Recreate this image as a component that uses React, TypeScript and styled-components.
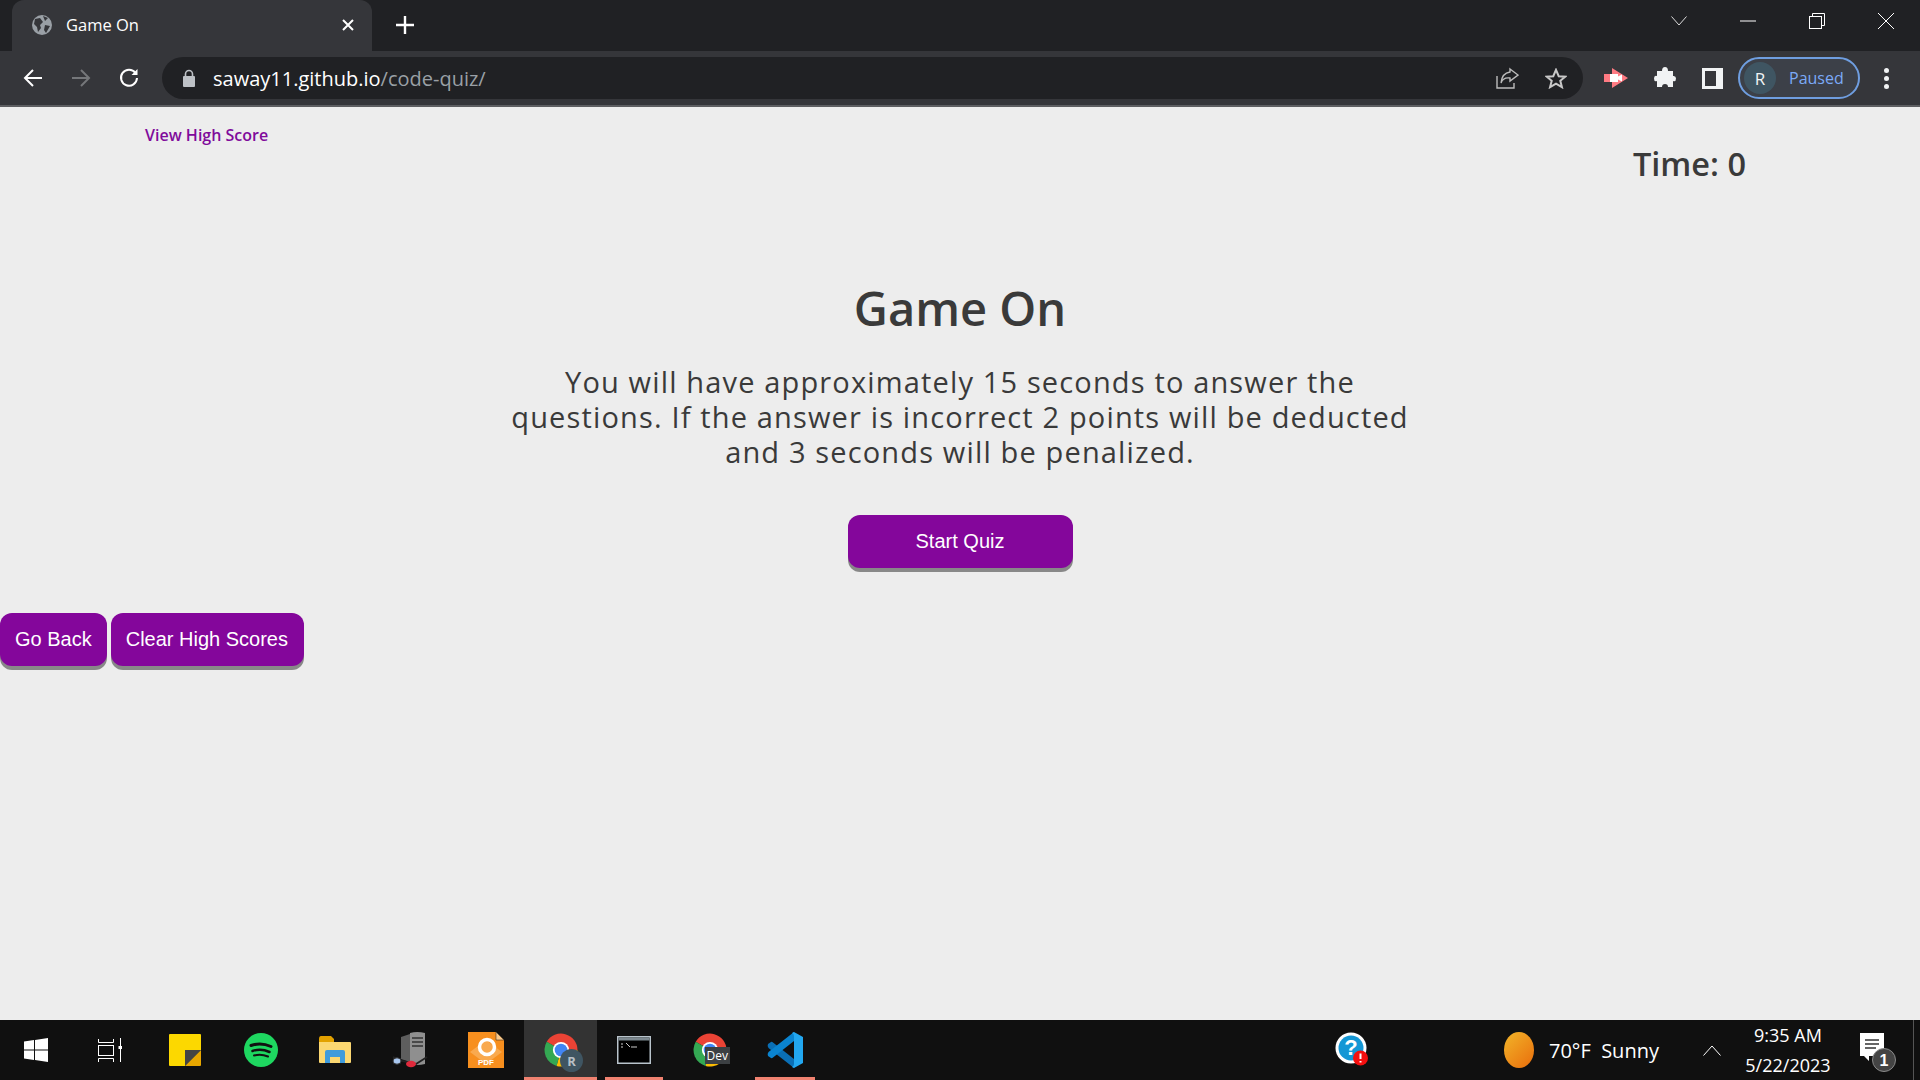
import { createGlobalStyle, styled } from 'styled-components';

const GlobalStyle = createGlobalStyle`
  html, body {
    margin: 0;
    padding: 0;
    height: 100%;
    overflow: hidden;
    background: #ededed;
  }
  * { box-sizing: border-box; }
`;

const uiFont = '"Open Sans", "Noto Sans", sans-serif';
const pageFont = '"Open Sans", "Noto Sans", sans-serif';

const ChromeLogo = () => (
  <svg width="36" height="36" viewBox="0 0 24 24">
    <path d="M12 12 L2.5 6.5 A11 11 0 0 1 23 12 Z" fill="#ea4335" />
    <path d="M12 12 L23 12 A11 11 0 0 1 9 22.6 Z" fill="#fbbc04" />
    <path d="M12 12 L9 22.6 A11 11 0 0 1 2.5 6.5 Z" fill="#34a853" />
    <circle cx="12" cy="12" r="5.4" fill="#fff" />
    <circle cx="12" cy="12" r="4.2" fill="#4285f4" />
  </svg>
);

const WindowsLogo = () => (
  <svg width="24" height="24" viewBox="0 0 24 24" fill="#fff">
    <path d="M0 3.4 L10 2 V11.4 H0 Z" />
    <path d="M11 1.9 L24 0 V11.4 H11 Z" />
    <path d="M0 12.6 H10 V22 L0 20.6 Z" />
    <path d="M11 12.6 H24 V24 L11 22.1 Z" />
  </svg>
);

const TaskViewIcon = () => (
  <svg width="24" height="24" viewBox="0 0 24 24" fill="none" stroke="#fff">
    <path d="M.5 1 V4.5 H15.5 V1" />
    <rect x=".5" y="7.5" width="15" height="10" />
    <path d="M.5 24 V20.5 H15.5 V24" />
    <path d="M22.5 0 V24" />
    <rect x="20.5" y="8" width="4" height="3" fill="#fff" stroke="none" />
  </svg>
);

const StickyIcon = () => (
  <svg width="32" height="32" viewBox="0 0 32 32">
    <path d="M1 0 H31 Q32 0 32 1 V16 L16 32 H1 Q0 32 0 31 V1 Q0 0 1 0 Z" fill="#fcd800" />
    <path d="M32 16 V31 Q32 32 31 32 H16 Z" fill="#e8a700" />
    <path d="M16 16 H32 L16 32 Z" fill="#444" />
  </svg>
);

const SpotifyIcon = () => (
  <svg width="34" height="34" viewBox="0 0 34 34" fill="none" stroke="#111" strokeLinecap="round">
    <circle cx="17" cy="17" r="17" fill="#1ed760" stroke="none" />
    <path d="M7 12.5 Q17 9 27 13.5" strokeWidth="3" />
    <path d="M8.5 18 Q17 15 25.5 19" strokeWidth="2.5" />
    <path d="M10 22.5 Q17 20.5 24 23.5" strokeWidth="2" />
  </svg>
);

const FolderIcon = () => (
  <svg width="32" height="28" viewBox="0 0 32 28">
    <path d="M0 3 Q0 0 2 0 H12 L15 3 V8 H0 Z" fill="#e2a100" />
    <path d="M0 6 H31 Q32 6 32 7 V26 Q32 27 31 27 H1 Q0 27 0 26 Z" fill="#fbd771" />
    <path d="M6 27 V16 Q6 14 8 14 H24 Q26 14 26 16 V27 H21 V21 H11 V27 Z" fill="#3f9bdc" />
  </svg>
);

const ServerIcon = () => (
  <svg width="36" height="36" viewBox="0 0 36 36">
    <path d="M9 5 L18 2 V30 L9 27 Z" fill="#5e5e5e" />
    <path d="M18 1 Q25 -1 33 1 V32 Q25 34 18 32 Z" fill="#8f8f8f" />
    <path d="M20 6 H31 M20 10 H31 M20 14 H31" stroke="#333" strokeWidth="1.5" />
    <path d="M1 25 L10 29 L24 32 L35 25" stroke="#222" strokeWidth="1.8" fill="none" />
    <ellipse cx="5" cy="29" rx="4" ry="3.2" fill="#a9c7ef" stroke="#333" />
    <ellipse cx="19" cy="32" rx="5" ry="3.2" fill="#e02a3c" />
  </svg>
);

const PdfIcon = () => (
  <svg width="36" height="36" viewBox="0 0 36 36">
    <path d="M0 0 H28 L36 8 V36 H0 Z" fill="#f78f1e" />
    <path d="M28 0 L36 8 H28 Z" fill="#fbc98a" stroke="#222" strokeWidth=".5" />
    <path d="M18 8 L34 20 L18 32 L2 20 Z" fill="#f9a94e" />
    <circle cx="19" cy="15" r="7.5" fill="none" stroke="#fff" strokeWidth="3.5" />
    <text x="18" y="33" fontSize="8" fontWeight="700" fontFamily="Liberation Sans" fill="#fff" textAnchor="middle">PDF</text>
  </svg>
);

const CmdIcon = () => (
  <svg width="34" height="28" viewBox="0 0 34 28">
    <rect x=".75" y=".75" width="32.5" height="26.5" fill="#000" stroke="#b9c4cc" strokeWidth="1.5" />
    <rect x="1.5" y="1.5" width="31" height="3" fill="#7d8990" />
    <path d="M4 8 H6 M4 11 H6 M9 7 L13 11 M14 11 H20" stroke="#ccc" strokeWidth="1" />
  </svg>
);

const VsCodeIcon = () => (
  <svg width="36" height="36" viewBox="0 0 36 36">
    <path d="M1 12 L4 10 Q5 9.5 6 10.5 L27 27 V36 L1.5 16 Q0 14 1 12 Z" fill="#0a6fb5" />
    <path d="M1 24 L4 26 Q5 26.5 6 25.5 L27 9 V0 L1.5 20 Q0 22 1 24 Z" fill="#0a84d0" />
    <path d="M25 1 L27 0 L36 5 V31 L27 36 L25 35 Q27 34 27 32 V4 Q27 2 25 1 Z" fill="#22a7f0" />
  </svg>
);

const HelpIcon = () => (
  <svg width="34" height="36" viewBox="0 0 34 36">
    <circle cx="16" cy="16" r="15.5" fill="#fff" />
    <circle cx="16" cy="16" r="12.5" fill="#1497d5" />
    <text x="16" y="23" fontSize="22" fontWeight="700" fontFamily="Liberation Sans" fill="#fff" textAnchor="middle">?</text>
    <circle cx="25.5" cy="26" r="7.5" fill="#f40f0f" />
    <path d="M25.5 21.5 V27 M25.5 29 V30.5" stroke="#fff" strokeWidth="2" />
  </svg>
);

const NotifyIcon = () => (
  <svg width="36" height="42" viewBox="0 0 36 42">
    <path d="M0 0 H24 V23 H9 L9 28 L4 23 H0 Z" fill="#fff" />
    <path d="M5 7 H19 M5 11 H19 M5 15 H16" stroke="#333" strokeWidth="1.3" />
    <circle cx="24" cy="27" r="11.5" fill="#444" stroke="#8a8a8a" />
    <text x="24" y="33" fontSize="16" fontWeight="700" fontFamily="Liberation Sans" fill="#fff" textAnchor="middle">1</text>
  </svg>
);

const App = () => {
  return (
    <>
      <GlobalStyle />
      <Screen>
        <TabStrip>
          <Tab>
            <svg width="20" height="20" viewBox="0 0 20 20">
              <circle cx="10" cy="10" r="10" fill="#9aa0a6" />
              <path d="M3 4 L8 3 L11 7 L8 10 L9 13 L6 17 L5 12 L2 9 Z M13 10 L18 11 L14 18 L12 15 Z M11 1 L16 3 L13 6 Z" fill="#35363a" />
            </svg>
            <TabTitle>Game On</TabTitle>
            <svg width="12" height="12" viewBox="0 0 12 12" stroke="#fff" strokeWidth="2">
              <path d="M1 1 L11 11 M11 1 L1 11" />
            </svg>
          </Tab>
          <NewTab>
            <svg width="18" height="18" viewBox="0 0 18 18" stroke="#fff" strokeWidth="2.4">
              <path d="M9 0 V18 M0 9 H18" />
            </svg>
          </NewTab>
          <WindowControls>
            <WindowButton $width={68}>
              <svg width="16" height="10" viewBox="0 0 16 10" fill="none" stroke="#ddd">
                <path d="M.5 .5 L8 9 L15.5 .5" />
              </svg>
            </WindowButton>
            <WindowButton $width={70}>
              <svg width="16" height="2" viewBox="0 0 16 2" stroke="#fff"><path d="M0 1 H16" /></svg>
            </WindowButton>
            <WindowButton $width={68}>
              <svg width="16" height="16" viewBox="0 0 16 16" fill="none" stroke="#fff">
                <rect x=".5" y="3.5" width="12" height="12" />
                <path d="M3.5 3 V.5 H15.5 V12.5 H13" />
              </svg>
            </WindowButton>
            <WindowButton $width={69}>
              <svg width="16" height="16" viewBox="0 0 16 16" stroke="#fff"><path d="M0 0 L16 16 M16 0 L0 16" /></svg>
            </WindowButton>
          </WindowControls>
        </TabStrip>

        <Toolbar>
          <NavButton>
            <svg width="20" height="20" viewBox="0 0 20 20" fill="none" stroke="#fff" strokeWidth="2"><path d="M19 10 H2 M10 2 L2 10 L10 18" /></svg>
          </NavButton>
          <NavButton>
            <svg width="20" height="20" viewBox="0 0 20 20" fill="none" stroke="#75777a" strokeWidth="2"><path d="M1 10 H18 M10 2 L18 10 L10 18" /></svg>
          </NavButton>
          <NavButton>
            <svg width="20" height="20" viewBox="0 0 20 20" fill="none" stroke="#fff" strokeWidth="2">
              <path d="M16.5 5 A8 8 0 1 0 18 10" />
              <path d="M18.5 1 V7 H12.5 Z" fill="#fff" stroke="none" />
            </svg>
          </NavButton>
          <Omnibox>
            <svg width="14" height="18" viewBox="0 0 14 18" fill="#bdc1c6">
              <rect x="1" y="7" width="12" height="11" rx="1" />
              <path d="M3.5 7 V5 A3.5 3.5 0 0 1 10.5 5 V7" fill="none" stroke="#bdc1c6" strokeWidth="1.6" />
            </svg>
            <Url>saway11.github.io<UrlPath>/code-quiz/</UrlPath></Url>
            <OmniIcons>
              <svg width="23" height="22" viewBox="0 0 23 22" fill="none" stroke="#bdbdbd" strokeWidth="1.4">
                <path d="M1 9 V21 H18 V16" />
                <path d="M14 2 L22 8 L14 14 V11 Q7 10 5 16 Q6 6 14 5 Z" />
              </svg>
              <svg width="22" height="21" viewBox="0 0 24 23" fill="none" stroke="#c8c8c8" strokeWidth="2.2">
                <path d="M12 2 L15 9 L22 9.5 L16.7 14 L18.5 21 L12 17.2 L5.5 21 L7.3 14 L2 9.5 L9 9 Z" />
              </svg>
            </OmniIcons>
          </Omnibox>
          <ExtensionIcons>
            <svg width="24" height="20" viewBox="0 0 24 20">
              <path d="M0 6 H8 V0 L24 10 L8 20 V14 H0 Z" fill="#ff7b83" />
              <path d="M6 6 H14 V8.5 L18 6.5 V13.5 L14 11.5 V14 H6 Z" fill="#fff" />
            </svg>
            <svg width="22" height="22" viewBox="0 0 22 22" fill="#f1f3f4">
              <path d="M8 4 Q8 0 11 0 Q14 0 14 4 H19 V9 Q22 8.5 22 11.5 Q22 15 19 14 V20 H14 Q14 17 11 17 Q8 17 8 20 H3 V14 Q0 15 0 11.5 Q0 8 3 9 V4 Z" />
            </svg>
            <svg width="21" height="21" viewBox="0 0 21 21">
              <rect width="21" height="21" fill="#f1f3f4" />
              <rect x="3" y="3" width="11" height="15" fill="#35363a" />
            </svg>
          </ExtensionIcons>
          <ProfilePill>
            <Avatar>R</Avatar>
            <PausedLabel>Paused</PausedLabel>
          </ProfilePill>
          <MenuDots>
            <Dot /><Dot /><Dot />
          </MenuDots>
        </Toolbar>

        <Page>
          <TopRow>
            <HighScoreLink href="#">View High Score</HighScoreLink>
            <Timer>Time: 0</Timer>
          </TopRow>
          <Hero>
            <Title>Game On</Title>
            <Intro>
              You will have approximately 15 seconds to answer the questions. If the answer is incorrect 2 points
              will be deducted and 3 seconds will be penalized.
            </Intro>
            <PurpleButton>Start Quiz</PurpleButton>
          </Hero>
          <ScoreActions>
            <PurpleButton $wide>Go Back</PurpleButton>
            <PurpleButton $wide>Clear High Scores</PurpleButton>
          </ScoreActions>
        </Page>

        <Taskbar>
          <TaskSlot $width={72}><WindowsLogo /></TaskSlot>
          <TaskSlot $width={75}><TaskViewIcon /></TaskSlot>
          <TaskSlot $width={76}><StickyIcon /></TaskSlot>
          <TaskSlot $width={75}><SpotifyIcon /></TaskSlot>
          <TaskSlot $width={74}><FolderIcon /></TaskSlot>
          <TaskSlot $width={75}><ServerIcon /></TaskSlot>
          <TaskSlot $width={77}><PdfIcon /></TaskSlot>
          <TaskSlot $width={73} $active $running>
            <ChromeLogo />
            <ProfileBadge>R</ProfileBadge>
          </TaskSlot>
          <TaskSlot $width={74} $running $inset={8}><CmdIcon /></TaskSlot>
          <TaskSlot $width={77}>
            <ChromeLogo />
            <DevBadge>Dev</DevBadge>
          </TaskSlot>
          <TaskSlot $width={74} $running $inset={7}><VsCodeIcon /></TaskSlot>
          <Tray>
            <HelpSlot><HelpIcon /></HelpSlot>
            <Sun />
            <Weather>70°F&nbsp;&nbsp;Sunny</Weather>
            <TrayChevron>
              <svg width="18" height="11" viewBox="0 0 18 11" fill="none" stroke="#fff"><path d="M.5 10.5 L9 1 L17.5 10.5" /></svg>
            </TrayChevron>
            <Clock>
              <span>9:35 AM</span>
              <span>5/22/2023</span>
            </Clock>
            <NotifySlot><NotifyIcon /></NotifySlot>
            <ShowDesktop />
          </Tray>
        </Taskbar>
      </Screen>
    </>
  );
};

export default App;

const Screen = styled.div`
  width: 1920px;
  height: 1080px;
  display: flex;
  flex-direction: column;
  overflow: hidden;
  background: #ededed;
`;

const TabStrip = styled.div`
  height: 51px;
  display: flex;
  align-items: stretch;
  padding-left: 12px;
  background: #202124;
`;
const Tab = styled.div`
  width: 360px;
  display: flex;
  align-items: center;
  padding: 0 18px 2px 20px;
  border-radius: 12px 12px 0 0;
  background: #35363a;
`;
const TabTitle = styled.span`
  flex: 1;
  margin-left: 14px;
  color: #fff;
  font: 16.5px ${uiFont};
`;
const NewTab = styled.div`
  width: 66px;
  display: flex;
  align-items: center;
  justify-content: center;
  padding-bottom: 2px;
`;
const WindowControls = styled.div`
  margin-left: auto;
  display: flex;
  padding-bottom: 9px;
`;
const WindowButton = styled.div<{ $width: number }>`
  width: ${(p) => p.$width}px;
  display: flex;
  align-items: center;
  justify-content: center;
`;

const Toolbar = styled.div`
  height: 56px;
  display: flex;
  align-items: center;
  padding-left: 9px;
  border-bottom: 2px solid #5d5e61;
  background: #35363a;
`;
const NavButton = styled.div`
  width: 48px;
  display: flex;
  justify-content: center;
`;
const Omnibox = styled.div`
  width: 1421px;
  height: 42px;
  margin-left: 9px;
  display: flex;
  align-items: center;
  padding: 0 16px 0 20px;
  border-radius: 21px;
  background: #202124;
`;
const Url = styled.span`
  flex: 1;
  margin-left: 17px;
  color: #fff;
  font: 20px ${uiFont};
`;
const UrlPath = styled.span`
  color: #9aa0a6;
`;
const OmniIcons = styled.div`
  display: flex;
  align-items: center;
  gap: 26px;
`;
const ExtensionIcons = styled.div`
  margin-left: 21px;
  display: flex;
  align-items: center;
  gap: 26px;
`;
const ProfilePill = styled.div`
  width: 122px;
  height: 42px;
  margin-left: 15px;
  display: flex;
  align-items: center;
  padding-left: 4px;
  border: 2px solid #6f9ee0;
  border-radius: 21px;
  background: #3c4048;
`;
const Avatar = styled.div`
  width: 32px;
  height: 32px;
  display: flex;
  align-items: center;
  justify-content: center;
  border-radius: 50%;
  color: #f1f3f4;
  font: 17px ${uiFont};
  background: #3f5562;
`;
const PausedLabel = styled.span`
  margin-left: 13px;
  color: #7baaf7;
  font: 16px ${uiFont};
`;
const MenuDots = styled.div`
  margin-left: 24px;
  display: flex;
  flex-direction: column;
  gap: 3px;
`;
const Dot = styled.span`
  width: 5px;
  height: 5px;
  border-radius: 50%;
  background: #f1f3f4;
`;

const Page = styled.main`
  flex: 1;
  display: flex;
  flex-direction: column;
  font-family: ${pageFont};
  color: #3a3a3a;
  background: #ededed;
`;
const TopRow = styled.div`
  display: flex;
  justify-content: space-between;
  align-items: flex-start;
  padding: 17px 174px 0 145px;
`;
const HighScoreLink = styled.a`
  color: #800b9b;
  font-size: 16px;
  font-weight: 600;
  text-decoration: none;
`;
const Timer = styled.div`
  margin-top: 20px;
  font-size: 32.5px;
  font-weight: 600;
  line-height: 40px;
  color: #3a3a3a;
`;
const Hero = styled.section`
  margin-top: 98px;
  display: flex;
  flex-direction: column;
  align-items: center;
`;
const Title = styled.h1`
  margin: 0;
  font-size: 47px;
  font-weight: 600;
  line-height: 52px;
`;
const Intro = styled.p`
  width: 910px;
  margin: 30px 0 0;
  text-align: center;
  font-size: 29px;
  line-height: 35px;
  letter-spacing: 1.15px;
`;
const PurpleButton = styled.button<{ $wide?: boolean }>`
  height: 53px;
  margin-top: ${(p) => (p.$wide ? 0 : '46px')};
  padding: 0 15px;
  min-width: ${(p) => (p.$wide ? 0 : '225px')};
  border: none;
  border-radius: 12px;
  box-shadow: 0 4px 0 #888;
  color: #fff;
  font: 20px "Liberation Sans", Arial, sans-serif;
  background: #84069b;
  &:last-child {
    padding-right: ${(p) => (p.$wide ? '16px' : '15px')};
  }
`;
const ScoreActions = styled.div`
  margin-top: 45px;
  display: flex;
  gap: 4px;
`;

const Taskbar = styled.footer`
  height: 60px;
  display: flex;
  align-items: stretch;
  background: #101010;
`;
const TaskSlot = styled.div<{ $width: number; $active?: boolean; $running?: boolean; $inset?: number }>`
  position: relative;
  width: ${(p) => p.$width}px;
  display: flex;
  align-items: center;
  justify-content: center;
  background: ${(p) => (p.$active ? '#333' : 'transparent')};
  &::after {
    content: '';
    display: ${(p) => (p.$running ? 'block' : 'none')};
    position: absolute;
    left: ${(p) => p.$inset ?? 0}px;
    right: ${(p) => p.$inset ?? 0}px;
    bottom: 0;
    height: 3px;
    background: #f08270;
  }
`;
const ProfileBadge = styled.span`
  position: absolute;
  right: 14px;
  bottom: 8px;
  width: 23px;
  height: 23px;
  display: flex;
  align-items: center;
  justify-content: center;
  border-radius: 50%;
  color: #b8c0c6;
  font: 700 13px ${uiFont};
  background: #3f5562;
`;
const DevBadge = styled.span`
  position: absolute;
  right: 18px;
  bottom: 16px;
  padding: 0 2px;
  color: #fff;
  font: 12px ${uiFont};
  background: #3c4043;
`;
const Tray = styled.div`
  flex: 1;
  display: flex;
  align-items: center;
  color: #fff;
  font-family: ${uiFont};
`;
const HelpSlot = styled.div`
  margin-left: 513px;
  display: flex;
`;
const Sun = styled.div`
  width: 30px;
  height: 36px;
  margin-left: 135px;
  border-radius: 50%;
  background: linear-gradient(135deg, #f2b529, #e96d0c);
`;
const Weather = styled.span`
  margin-left: 15px;
  font-size: 20px;
`;
const TrayChevron = styled.div`
  margin-left: 44px;
  display: flex;
`;
const Clock = styled.div`
  width: 120px;
  margin-left: 7px;
  display: flex;
  flex-direction: column;
  align-items: center;
  gap: 6px;
  font-size: 18px;
  line-height: 24px;
`;
const NotifySlot = styled.div`
  margin-left: 12px;
  padding-top: 8px;
  display: flex;
`;
const ShowDesktop = styled.div`
  margin-left: auto;
  margin-right: 6px;
  width: 1px;
  height: 100%;
  background: #555;
`;
